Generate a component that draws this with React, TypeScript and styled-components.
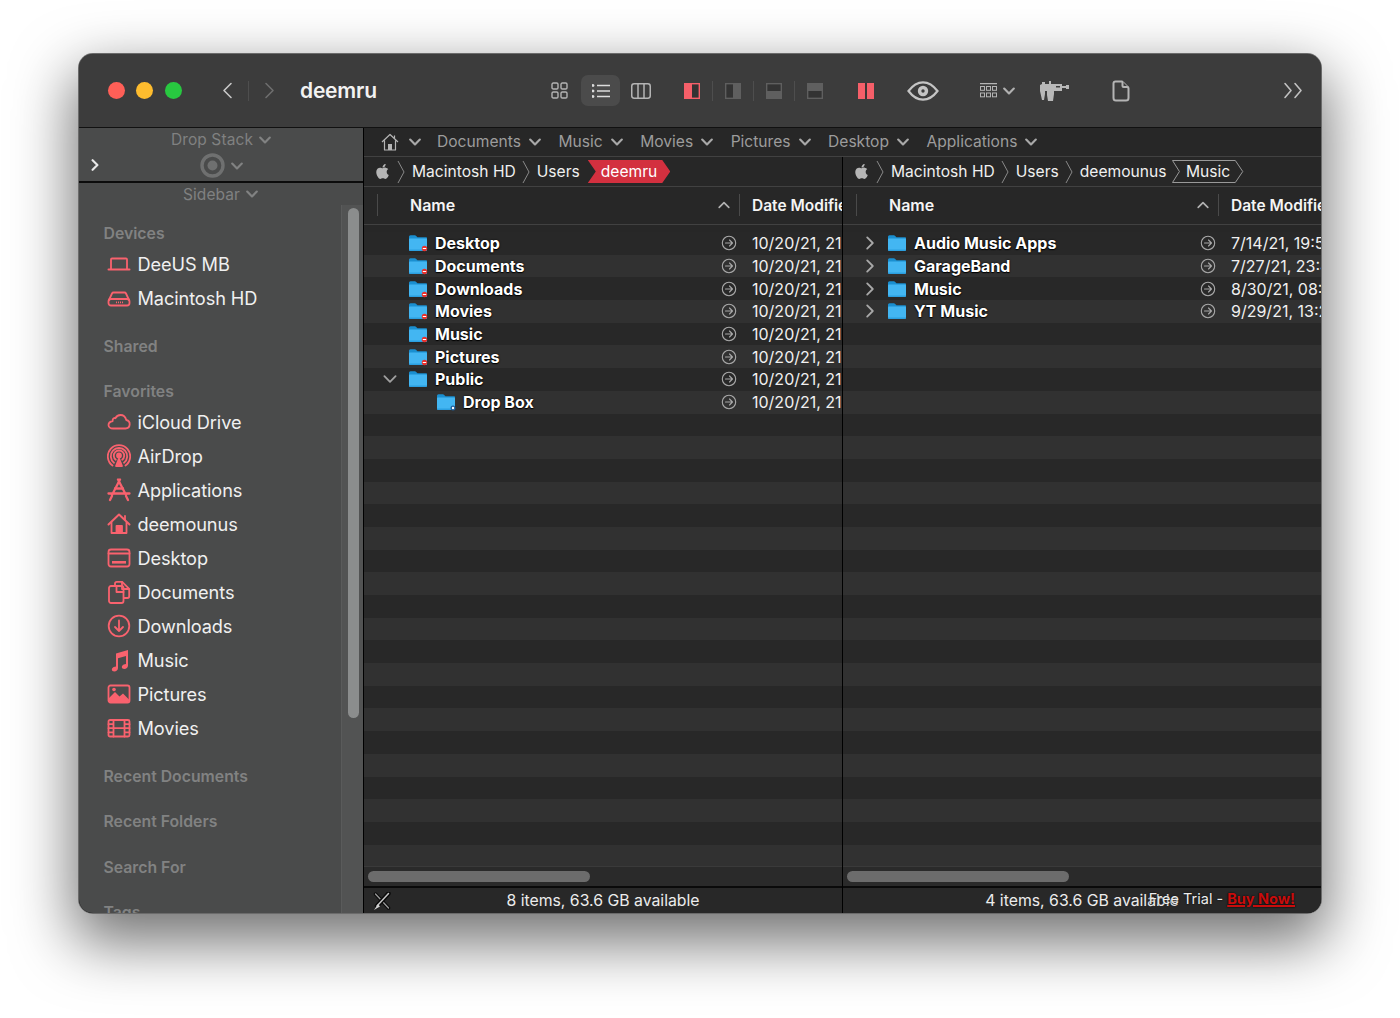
import React from "react";
import styled, { createGlobalStyle } from "styled-components";
import { FaApple } from "react-icons/fa";

const Global = createGlobalStyle`
  html, body { margin: 0; padding: 0; background: #fff; }
  body { font-family: Inter, "Liberation Sans", sans-serif; -webkit-font-smoothing: antialiased; }
  * { box-sizing: border-box; }
`;

const Stage = styled.div`
  width: 1400px;
  height: 1018px;
  padding: 54px 79px;
  overflow: hidden;
`;
const Win = styled.div`
  width: 1242px;
  height: 859px;
  border-radius: 14px;
  overflow: hidden;
  display: flex;
  flex-direction: column;
  background: #3c3c3c;
  box-shadow: 0 0 0 1px #6b6b6b, 0 24px 60px 6px rgba(0, 0, 0, 0.55);
`;
const Toolbar = styled.header`
  height: 74px;
  flex: none;
  display: flex;
  align-items: center;
  padding: 0 18px 0 28.5px;
  background: #3c3c3c;
  border-bottom: 1px solid #111;
`;
const Light = styled.span<{ $c: string }>`
  width: 17px;
  height: 17px;
  border-radius: 50%;
  background: ${(p) => p.$c};
  margin-right: 11.5px;
  flex: none;
`;
const Slot = styled.div<{ $w: number; $ml?: number }>`
  width: ${(p) => p.$w}px;
  margin-left: ${(p) => p.$ml ?? 0}px;
  flex: none;
  height: 31px;
  display: flex;
  align-items: center;
  justify-content: center;
  gap: 6px;
`;
const ActiveSlot = styled(Slot)`
  background: #4b4b4b;
  border-radius: 7px;
`;
const ToolSep = styled.span<{ $ml?: number }>`
  width: 1px;
  height: 20px;
  flex: none;
  margin-left: ${(p) => p.$ml ?? 0}px;
  background: #4e4e4e;
`;
const Title = styled.h1`
  width: 239px;
  margin: 0 0 0 21px;
  flex: none;
  font-size: 21px;
  font-weight: 600;
  letter-spacing: -0.2px;
  color: #f2f2f2;
`;
const Overflow = styled.div`
  margin-left: auto;
  display: flex;
`;
const Body = styled.div`
  flex: 1;
  display: flex;
  min-height: 0;
  background: #000;
`;
const Sidebar = styled.aside`
  width: 284px;
  flex: none;
  margin-right: 1px;
  display: flex;
  flex-direction: column;
  background: #4a4b4b;
  overflow: hidden;
`;
const StackArea = styled.div`
  height: 55px;
  flex: none;
  position: relative;
  display: flex;
  flex-direction: column;
  align-items: center;
  border-bottom: 2px solid #0c0c0c;
`;
const GhostLabel = styled.div`
  display: flex;
  align-items: center;
  justify-content: center;
  gap: 6px;
  height: 23px;
  font-size: 15.5px;
  font-weight: 400;
  letter-spacing: 0.1px;
  color: #808181;
`;
const StackIcon = styled.div`
  display: flex;
  align-items: center;
  gap: 6px;
  height: 29px;
`;
const StackExpand = styled.span`
  position: absolute;
  left: 10px;
  top: 31px;
  display: flex;
`;
const SidebarLabelRow = styled(GhostLabel)`
  height: 22px;
  flex: none;
  margin-left: -1px;
`;
const SideBody = styled.div`
  flex: 1;
  min-height: 0;
  display: flex;
`;
const SideList = styled.nav`
  flex: 1;
  min-width: 0;
  display: flex;
  flex-direction: column;
  padding: 17px 0 0 24.5px;
`;
const SectionLabel = styled.div<{ $mt?: number }>`
  height: 21px;
  flex: none;
  margin-top: ${(p) => p.$mt ?? 0}px;
  margin-bottom: 4px;
  line-height: 23px;
  font-size: 15.8px;
  font-weight: 600;
  white-space: nowrap;
  color: #818282;
`;
const SideItem = styled.div`
  height: 34px;
  flex: none;
  display: flex;
  align-items: center;
  font-size: 18.2px;
  letter-spacing: -0.1px;
  color: #f0f0f0;
`;
const SideIcon = styled.span`
  width: 34px;
  flex: none;
  display: flex;
  align-items: center;
  padding-left: 3px;
`;
const Track = styled.div`
  width: 22px;
  flex: none;
  padding: 3px 0 0 6px;
  background: #525353;
  border-left: 1px solid #5a5b5b;
`;
const Thumb = styled.div`
  width: 11px;
  height: 510px;
  border-radius: 6px;
  background: #8b8d8d;
`;
const Main = styled.main`
  flex: 1;
  min-width: 0;
  display: flex;
  flex-direction: column;
`;
const Panes = styled.div`
  flex: 1;
  min-height: 0;
  display: flex;
`;
const Pane = styled.section<{ $last?: boolean }>`
  width: 478px;
  flex: none;
  margin-right: ${(p) => (p.$last ? 0 : 1)}px;
  display: flex;
  flex-direction: column;
  background: #272727;
  overflow: hidden;
  position: relative;
`;
const FavBar = styled.div`
  height: 29px;
  flex: none;
  display: flex;
  align-items: center;
  padding: 0 0 1px 17px;
  background: #272727;
  border-bottom: 1px solid #414141;
  font-size: 15.6px;
  color: #9c9c9c;
  white-space: nowrap;
`;
const FavItem = styled.span`
  display: flex;
  align-items: center;
  gap: 8px;
  margin-right: 17.5px;
`;
const FavHome = styled(FavItem)`
  margin-right: 16px;
  gap: 10px;
`;
const PathBar = styled.div`
  height: 30px;
  flex: none;
  display: flex;
  align-items: center;
  padding-left: 10px;
  border-bottom: 1px solid #414141;
  font-size: 15.6px;
  color: #f0f0f0;
  white-space: nowrap;
`;
const Crumb = styled.span`
  display: flex;
  align-items: center;
  margin-left: 6px;
`;
const CrumbSep = styled.span`
  display: flex;
  margin-right: 7px;
`;
const RedCrumb = styled.span`
  height: 23px;
  margin-left: 8px;
  padding: 0 13px;
  display: flex;
  align-items: center;
  background: #d3303f;
  color: #fff;
  clip-path: polygon(0 0, calc(100% - 8px) 0, 100% 50%, calc(100% - 8px) 100%, 0 100%, 8px 50%);
`;
const OutlineCrumb = styled.span`
  position: relative;
  height: 23px;
  margin-left: 6px;
  padding: 0 13.5px;
  display: flex;
  align-items: center;
`;
const CrumbOutline = styled.svg`
  position: absolute;
  inset: 0;
  width: 100%;
  height: 100%;
`;
const Header = styled.div`
  height: 38px;
  flex: none;
  display: flex;
  align-items: center;
  padding: 0 0 1px 13px;
  border-bottom: 1px solid #414141;
  font-size: 16px;
  font-weight: 600;
  color: #f5f5f5;
  white-space: nowrap;
`;
const HeadSep = styled.span`
  width: 1px;
  height: 22px;
  flex: none;
  background: #4a4a4a;
`;
const HeadName = styled.span`
  width: 306px;
  margin-left: 32px;
  flex: none;
`;
const HeadCaret = styled.span`
  width: 16px;
  margin-right: 7px;
  flex: none;
  display: flex;
  justify-content: center;
`;
const HeadDate = styled.span`
  margin-left: 12px;
  font-size: 15.5px;
`;
const Rows = styled.div`
  flex: 1;
  min-height: 0;
  padding-top: 7px;
  overflow: hidden;
`;
const Row = styled.div<{ $alt: boolean }>`
  height: 22.7px;
  display: flex;
  align-items: center;
  white-space: nowrap;
  background: ${(p) => (p.$alt ? "#313131" : "#282828")};
`;
const NameCell = styled.div<{ $indent: number }>`
  width: 357px;
  flex: none;
  display: flex;
  align-items: center;
  padding-left: ${(p) => 45 + p.$indent}px;
  position: relative;
  font-size: 16px;
  font-weight: 700;
  color: #fff;
  text-shadow: 0 1px 1px #000, 0 0 2px #000;
`;
const Disclosure = styled.span<{ $x: number }>`
  position: absolute;
  left: ${(p) => p.$x}px;
  top: 50%;
  transform: translateY(-50%);
  display: flex;
`;
const FolderBox = styled.span`
  width: 27px;
  margin-left: -1px;
  flex: none;
  display: flex;
`;
const InfoCell = styled.span`
  width: 31px;
  flex: none;
  display: flex;
`;
const DateCell = styled.span`
  font-size: 16px;
  color: #f0f0f0;
`;
const HScroll = styled.div`
  height: 20px;
  flex: none;
  padding: 4px 0 0 4px;
  background: #2a2a2a;
  border-top: 1px solid #3a3a3a;
`;
const HThumb = styled.div`
  width: 222px;
  height: 11px;
  border-radius: 6px;
  background: #6c6c6c;
`;
const Status = styled.footer`
  height: 27px;
  flex: none;
  display: flex;
  align-items: center;
  justify-content: center;
  position: relative;
  padding-bottom: 1px;
  border-top: 2px solid #0a0a0a;
  background: #282828;
  font-size: 15.8px;
  color: #ececec;
  white-space: nowrap;
`;
const StatusIcon = styled.span`
  position: absolute;
  left: 9px;
  top: 4px;
  display: flex;
`;
const Trial = styled.span`
  position: absolute;
  right: 26px;
  top: 2px;
  font-size: 14.5px;
  color: #ededed;
  text-shadow: 0 0 2px #000;
`;
const Buy = styled.a`
  color: #c80c0c;
  font-weight: 700;
  text-decoration: underline;
  text-decoration-thickness: 1.5px;
`;

const PINK = "#f9626e";
const GREY = "#b4b4b4";

const Chev = ({ d, s = 10, c = "#9a9a9a", w = 1.8 }: { d: "down" | "up" | "left" | "right"; s?: number; c?: string; w?: number }) => {
  const p = { down: "M1 3l4 4 4-4", up: "M1 7l4-4 4 4", left: "M7 1L3 5l4 4", right: "M3 1l4 4-4 4" }[d];
  return (
    <svg width={s} height={s} viewBox="0 0 10 10" fill="none" stroke={c} strokeWidth={w} strokeLinecap="round" strokeLinejoin="round">
      <path d={p} />
    </svg>
  );
};
const LongChev = ({ c, w, h }: { c: string; w: number; h: number }) => (
  <svg width={w} height={h} viewBox={`0 0 ${w} ${h}`} fill="none" stroke={c} strokeWidth="1.6" strokeLinecap="round" strokeLinejoin="round">
    <path d={`M${w - 2} 1.5L2 ${h / 2}L${w - 2} ${h - 1.5}`} />
  </svg>
);
const RightLongChev = ({ c, w, h }: { c: string; w: number; h: number }) => (
  <svg width={w} height={h} viewBox={`0 0 ${w} ${h}`} fill="none" stroke={c} strokeWidth="1.6" strokeLinecap="round" strokeLinejoin="round">
    <path d={`M2 1.5L${w - 2} ${h / 2}L2 ${h - 1.5}`} />
  </svg>
);
const PathSep = () => (
  <svg width="8" height="24" viewBox="0 0 8 24" fill="none" stroke="#8a8a8a" strokeWidth="1">
    <path d="M1 1l6 11-6 11" />
  </svg>
);

const GridIcon = () => (
  <svg width="17" height="17" viewBox="0 0 17 17" fill="none" stroke={GREY} strokeWidth="1.4">
    <rect x="1" y="1" width="6" height="6" rx="1.3" />
    <rect x="10" y="1" width="6" height="6" rx="1.3" />
    <rect x="1" y="10" width="6" height="6" rx="1.3" />
    <rect x="10" y="10" width="6" height="6" rx="1.3" />
  </svg>
);
const ListIcon = () => (
  <svg width="18" height="14" viewBox="0 0 18 14" stroke="#dcdcdc" strokeWidth="1.5" fill="#dcdcdc">
    <path d="M5 1.5h13M5 7h13M5 12.5h13" />
    <circle cx="1" cy="1.5" r=".7" />
    <circle cx="1" cy="7" r=".7" />
    <circle cx="1" cy="12.5" r=".7" />
  </svg>
);
const ColumnsIcon = () => (
  <svg width="20" height="16" viewBox="0 0 20 16" fill="none" stroke={GREY} strokeWidth="1.5">
    <rect x=".75" y=".75" width="18.5" height="14.5" rx="2.4" />
    <path d="M7 1v14M13 1v14" />
  </svg>
);
const PaneIcon = ({ kind }: { kind: "redLeft" | "left" | "bottom" | "top" | "split" }) => {
  const red = "#f55f69";
  const dim = "#5f5f5f";
  if (kind === "split")
    return (
      <svg width="16" height="16" viewBox="0 0 16 16">
        <rect width="7.2" height="16" fill={red} />
        <rect x="8.8" width="7.2" height="16" fill={red} />
        <rect x="7.2" width="1.6" height="16" fill="#333" />
      </svg>
    );
  if (kind === "redLeft")
    return (
      <svg width="16" height="16" viewBox="0 0 16 16">
        <rect width="16" height="16" fill={red} />
        <rect x="8" y="1.4" width="6.6" height="13.2" fill="#333" />
      </svg>
    );
  if (kind === "left")
    return (
      <svg width="16" height="16" viewBox="0 0 16 16">
        <rect width="16" height="16" fill={dim} />
        <rect x="1.4" y="1.4" width="6.6" height="13.2" fill="#333" />
      </svg>
    );
  return (
    <svg width="16" height="16" viewBox="0 0 16 16">
      <rect width="16" height="16" fill={dim} />
      {kind === "bottom" ? <rect x="1.4" y="1.4" width="13.2" height="6.6" fill="#333" /> : <rect x="1.4" y="8" width="13.2" height="6.6" fill="#333" />}
    </svg>
  );
};
const EyeIcon = () => (
  <svg width="32" height="20" viewBox="0 0 32 20" fill="none">
    <path d="M1.5 10C6 4 11 1.3 16 1.3S26 4 30.500 10C26 16 21 18.700 16 18.700S6 16 1.500 10Z" stroke="#c4c4c4" strokeWidth="2.200" />
    <circle cx="16" cy="10" r="5.200" fill="#c4c4c4" />
    <circle cx="16" cy="10" r="1.700" fill="#3c3c3c" />
  </svg>
);
const TableIcon = () => (
  <svg width="17" height="15" viewBox="0 0 17 15" fill="none" stroke={GREY}>
    <path d="M0 .7h17" strokeWidth="1.300" />
    <rect x=".5" y="3.500" width="4" height="3.800" />
    <rect x="6.500" y="3.500" width="4" height="3.800" />
    <rect x="12.500" y="3.500" width="4" height="3.800" />
    <rect x=".5" y="10" width="4" height="3.800" />
    <rect x="6.500" y="10" width="4" height="3.800" />
    <rect x="12.500" y="10" width="4" height="3.800" />
  </svg>
);
const CaliperIcon = () => (
  <svg width="29" height="21" viewBox="0 0 29 21" fill="#b8b8b8">
    <path d="M2 2h3v2h4V1h2v3h11v7h-8v3l-1 7H8l-1-6V11H5v3l-1 6H2l-2-9V5l2-1Z" />
    <path d="M22 6h4V5h3v4h-3V8h-4Z" />
    <rect x="16" y="6" width="4" height="1.500" fill="#3c3c3c" />
  </svg>
);
const DocIcon = () => (
  <svg width="18" height="22" viewBox="0 0 18 22" fill="none" stroke={GREY} strokeWidth="2" strokeLinejoin="round">
    <path d="M3.500 1.500H10c.5 0 .5.500.5 1V6c0 .6.500 1 1 1H15c1 0 1.500.500 1.500 1.500V18c0 1.500-1 2.500-2.500 2.500H4c-1.500 0-2.500-1-2.500-2.500V3.500c0-1 1-2 2-2Z" />
    <path d="M11 1.500l5.500 5.500" strokeWidth="1" />
  </svg>
);
const TargetIcon = () => (
  <svg width="25" height="25" viewBox="0 0 25 25" fill="none">
    <circle cx="12.500" cy="12.500" r="10.500" stroke="#6f7070" strokeWidth="3.400" />
    <circle cx="12.500" cy="12.500" r="5" fill="#6f7070" />
  </svg>
);

const Pink = ({ children }: { children: React.ReactNode }) => (
  <svg width="24" height="24" viewBox="0 0 24 24" fill="none" stroke={PINK} strokeWidth="1.800" strokeLinejoin="round" strokeLinecap="round">
    {children}
  </svg>
);
const icons: Record<string, React.ReactNode> = {
  laptop: (
    <Pink>
      <path d="M4 17V7.500A1 1 0 0 1 5 6.500h14a1 1 0 0 1 1 1V17" />
      <path d="M1.500 17.500h21" strokeWidth="2" />
    </Pink>
  ),
  hd: (
    <Pink>
      <path d="M2 14l3-6.500c.3-.6.700-1 1.500-1h11c.8 0 1.200.4 1.500 1l3 6.500" />
      <rect x="1.500" y="13" width="21" height="6.500" rx="2.500" />
      <path d="M9 16.300h7" strokeDasharray="1 1" strokeWidth="1.800" strokeLinecap="butt" />
    </Pink>
  ),
  cloud: (
    <Pink>
      <path d="M6 18.500h12.500a4.300 4.300 0 0 0 .8-8.500C18.500 7 16 5 13.500 5c-2.300 0-4 1-5 3.200C7.800 7.800 6.500 8 6 9c-.5.700-.4 1.500-.3 2C3.500 11.500 1.500 13 1.500 15c0 2 2 3.500 4.500 3.500Z" />
    </Pink>
  ),
  airdrop: (
    <Pink>
      <path d="M5.500 21.500a11.200 11.200 0 1 1 13 0" />
      <path d="M7 18.700a8.200 8.200 0 1 1 10 0" />
      <path d="M8.800 15.800a5.200 5.200 0 1 1 6.400 0" />
      <circle cx="12" cy="11.500" r="2" fill={PINK} />
      <path d="M12 14.500l-3 7.500h6Z" fill={PINK} />
    </Pink>
  ),
  apps: (
    <Pink>
      <path d="M13 1.500L5 17M11 1.500L19 17M1.500 15.500h21" strokeWidth="2.300" />
      <path d="M3 22l2-4M21 22l-2-4M8 10.500h8" strokeWidth="2.300" />
    </Pink>
  ),
  home: (
    <Pink>
      <path d="M1.500 12.500L12 2.500l10.500 10" strokeWidth="2" />
      <path d="M4.500 10.500V21h15V10.500" />
      <rect x="9.500" y="14" width="5.500" height="7" fill={PINK} />
      <path d="M18 4v4" />
    </Pink>
  ),
  desktop: (
    <Pink>
      <rect x="1.500" y="3.500" width="21" height="17" rx="2.500" />
      <path d="M1.500 7.500h21" />
      <path d="M5 16.300h14" strokeWidth="2.600" strokeLinecap="butt" />
    </Pink>
  ),
  docs: (
    <Pink>
      <path d="M8 5.500V3.500c0-1 .7-1.700 1.700-1.700h5.500l7 7v7.500c0 1-.7 1.700-1.700 1.700H17" />
      <path d="M15 2v7h7" />
      <rect x="2" y="6" width="14.500" height="17" rx="2" />
      <path d="M9.500 6v6h7" />
    </Pink>
  ),
  down: (
    <Pink>
      <circle cx="12" cy="12" r="10.300" />
      <path d="M12 6.500v10.500M8 13l4 4 4-4" />
    </Pink>
  ),
  music: (
    <svg width="24" height="24" viewBox="0 0 24 24" fill={PINK}>
      <path d="M9 5.500L21 2v15.500c0 2-1.700 3.500-3.700 3.500-1.500 0-2.500-.8-2.500-2 0-1.500 1.500-2.600 3-2.800l1.200-.2V8L11 10.200V20c0 2-1.700 3.500-3.700 3.500-1.500 0-2.500-.8-2.500-2 0-1.500 1.500-2.600 3-2.800L9 18.500Z" />
    </svg>
  ),
  pictures: (
    <svg width="24" height="24" viewBox="0 0 24 24">
      <rect x="1.500" y="3.500" width="21" height="17" rx="2" fill="none" stroke={PINK} strokeWidth="1.800" />
      <path d="M2 19v-3l6-6 4.500 4.500 3.500-3 6 6V19a1 1 0 0 1-1 1H3a1 1 0 0 1-1-1Z" fill={PINK} />
      <circle cx="7" cy="7.500" r="1.800" fill={PINK} />
    </svg>
  ),
  movies: (
    <Pink>
      <rect x="1.500" y="4" width="21" height="16.500" rx="1.500" />
      <path d="M6.500 4v16.500M17.500 4v16.500M6.500 12.200h11M1.500 8.200h5M1.500 12.200h5M1.500 16.300h5M17.500 8.200h5M17.500 12.200h5M17.500 16.300h5" />
    </Pink>
  ),
};
const Folder = ({ badge }: { badge?: "red" | "blue" }) => (
  <svg width="20" height="18" viewBox="0 0 20 18">
    <path d="M1 3c0-1 .6-1.700 1.500-1.700h4.300c.6 0 1 .2 1.400.6L9.500 3.200H18c.6 0 1 .4 1 1V6H1Z" fill="#1a8fd0" />
    <path d="M1 5.500c0-.5.400-1 1-1h16c.6 0 1 .5 1 1v10.300c0 .7-.5 1.200-1.200 1.200H2.200C1.500 17 1 16.500 1 15.800Z" fill="#43b6f2" />
    <path d="M1 15.500h18v.3c0 .7-.5 1.200-1.200 1.200H2.200C1.500 17 1 16.500 1 15.800Z" fill="#2b9fe0" />
    {badge === "red" && (
      <>
        <circle cx="16.500" cy="14.500" r="2.700" fill="#e8322e" />
        <rect x="14.800" y="14" width="3.400" height="1" fill="#fff" />
      </>
    )}
    {badge === "blue" && (
      <>
        <circle cx="17" cy="15" r="2.500" fill="#1f5f9c" />
        <circle cx="17" cy="15" r="1.200" fill="#fff" />
      </>
    )}
  </svg>
);
const InfoIcon = () => (
  <svg width="16" height="16" viewBox="0 0 16 16" fill="none" stroke="#a8a8a8" strokeWidth="1.100" strokeLinecap="round" strokeLinejoin="round">
    <circle cx="8" cy="8" r="6.700" />
    <path d="M4.500 8h7M8.500 5l3 3-3 3" />
  </svg>
);
const HomeSmall = () => (
  <svg width="18" height="18" viewBox="0 0 18 18" fill="none" stroke="#b5b5b5" strokeWidth="1.200" strokeLinejoin="round">
    <path d="M1 9l8-7.500L17 9M3.500 7.500V17h11V7.500" />
    <rect x="7" y="11" width="4" height="6" fill="#b5b5b5" stroke="none" />
    <path d="M13.500 2.500v3" />
  </svg>
);
const CrossedTools = () => (
  <svg width="18" height="19" viewBox="0 0 18 19" fill="none" strokeLinecap="round">
    <path d="M2.500 2l13 14" stroke="#0b0b0b" strokeWidth="3.500" />
    <path d="M2.500 2l13 14" stroke="#9a9a9a" strokeWidth="1.300" />
    <path d="M15.500 1.500L4 14" stroke="#0b0b0b" strokeWidth="4.500" />
    <path d="M15.500 1.500L4 14" stroke="#c4c4c4" strokeWidth="1.500" />
    <path d="M5 12L1 18l6-3.500Z" fill="#d0d0d0" />
  </svg>
);

const favs = ["Documents", "Music", "Movies", "Pictures", "Desktop", "Applications"];
const leftRows = [
  { n: "Desktop", b: "red" as const },
  { n: "Documents", b: "red" as const },
  { n: "Downloads", b: "red" as const },
  { n: "Movies", b: "red" as const },
  { n: "Music", b: "red" as const },
  { n: "Pictures", b: "red" as const },
  { n: "Public", open: true },
  { n: "Drop Box", b: "blue" as const, indent: 28 },
];
const rightRows = [
  { n: "Audio Music Apps", d: "7/14/21, 19:55", closed: true },
  { n: "GarageBand", d: "7/27/21, 23:44", closed: true },
  { n: "Music", d: "8/30/21, 08:12", closed: true },
  { n: "YT Music", d: "9/29/21, 13:27", closed: true },
];
type R = { n: string; b?: "red" | "blue"; indent?: number; open?: boolean; closed?: boolean; d?: string };

const ROWS = 28;

const FileList = ({ items, defDate }: { items: R[]; defDate: string }) => (
  <Rows>
    {Array.from({ length: ROWS }, (_, i) => {
      const it = items[i];
      return (
        <Row key={i} $alt={i % 2 === 1}>
          {it && (
            <>
              <NameCell $indent={it.indent ?? 0}>
                {it.open && (
                  <Disclosure $x={19}>
                    <Chev d="down" s={14} c="#a0a0a0" w={1.300} />
                  </Disclosure>
                )}
                {it.closed && (
                  <Disclosure $x={20}>
                    <Chev d="right" s={14} c="#a8a8a8" w={1.300} />
                  </Disclosure>
                )}
                <FolderBox>
                  <Folder badge={it.b} />
                </FolderBox>
                {it.n}
              </NameCell>
              <InfoCell>
                <InfoIcon />
              </InfoCell>
              <DateCell>{it.d ?? defDate}</DateCell>
            </>
          )}
        </Row>
      );
    })}
  </Rows>
);

const TableHead = () => (
  <Header>
    <HeadSep />
    <HeadName>Name</HeadName>
    <HeadCaret>
      <Chev d="up" s={12} c="#b0b0b0" w={1.400} />
    </HeadCaret>
    <HeadSep />
    <HeadDate>Date Modified</HeadDate>
  </Header>
);

const AppleMark = () => <FaApple size={17} color="#b5b5b5" />;

export default function App() {
  const sideA = [
    ["laptop", "DeeUS MB"],
    ["hd", "Macintosh HD"],
  ];
  const sideB = [
    ["cloud", "iCloud Drive"],
    ["airdrop", "AirDrop"],
    ["apps", "Applications"],
    ["home", "deemounus"],
    ["desktop", "Desktop"],
    ["docs", "Documents"],
    ["down", "Downloads"],
    ["music", "Music"],
    ["pictures", "Pictures"],
    ["movies", "Movies"],
  ];
  return (
    <Stage>
      <Global />
      <Win>
        <Toolbar>
          <Light $c="#ff5f57" />
          <Light $c="#febc2e" />
          <Light $c="#28c840" />
          <Slot $w={20} $ml={24}>
            <LongChev c="#c8c8c8" w={11} h={17} />
          </Slot>
          <ToolSep $ml={11} />
          <Slot $w={20} $ml={10}>
            <RightLongChev c="#6e6e6e" w={11} h={17} />
          </Slot>
          <Title>deemru</Title>
          <Slot $w={40}>
            <GridIcon />
          </Slot>
          <ActiveSlot $w={39} $ml={2}>
            <ListIcon />
          </ActiveSlot>
          <Slot $w={42}>
            <ColumnsIcon />
          </Slot>
          <Slot $w={40} $ml={10}>
            <PaneIcon kind="redLeft" />
          </Slot>
          <ToolSep />
          <Slot $w={40}>
            <PaneIcon kind="left" />
          </Slot>
          <ToolSep />
          <Slot $w={40}>
            <PaneIcon kind="bottom" />
          </Slot>
          <ToolSep />
          <Slot $w={40}>
            <PaneIcon kind="top" />
          </Slot>
          <Slot $w={62}>
            <PaneIcon kind="split" />
          </Slot>
          <Slot $w={52}>
            <EyeIcon />
          </Slot>
          <Slot $w={69} $ml={14}>
            <TableIcon />
            <Chev d="down" s={12} c="#b0b0b0" />
          </Slot>
          <Slot $w={44}>
            <CaliperIcon />
          </Slot>
          <Slot $w={90}>
            <DocIcon />
          </Slot>
          <Overflow>
            <RightLongChev c="#c0c0c0" w={10} h={17} />
            <RightLongChev c="#c0c0c0" w={10} h={17} />
          </Overflow>
        </Toolbar>
        <Body>
          <Sidebar>
            <StackArea>
              <GhostLabel>
                Drop Stack <Chev d="down" s={12} c="#818282" />
              </GhostLabel>
              <StackIcon>
                <TargetIcon />
                <Chev d="down" s={12} c="#818282" />
              </StackIcon>
              <StackExpand>
                <Chev d="right" s={12} c="#e8e8e8" />
              </StackExpand>
            </StackArea>
            <SidebarLabelRow>
              Sidebar <Chev d="down" s={12} c="#818282" />
            </SidebarLabelRow>
            <SideBody>
              <SideList>
                <SectionLabel>Devices</SectionLabel>
                {sideA.map(([ic, t]) => (
                  <SideItem key={t}>
                    <SideIcon>{icons[ic]}</SideIcon>
                    {t}
                  </SideItem>
                ))}
                <SectionLabel $mt={20}>Shared</SectionLabel>
                <SectionLabel $mt={20}>Favorites</SectionLabel>
                {sideB.map(([ic, t]) => (
                  <SideItem key={t}>
                    <SideIcon>{icons[ic]}</SideIcon>
                    {t}
                  </SideItem>
                ))}
                <SectionLabel $mt={20}>Recent Documents</SectionLabel>
                <SectionLabel $mt={20}>Recent Folders</SectionLabel>
                <SectionLabel $mt={21}>Search For</SectionLabel>
                <SectionLabel $mt={20}>Tags</SectionLabel>
              </SideList>
              <Track>
                <Thumb />
              </Track>
            </SideBody>
          </Sidebar>
          <Main>
            <FavBar>
              <FavHome>
                <HomeSmall />
                <Chev d="down" s={12} c="#a8a8a8" />
              </FavHome>
              {favs.map((f) => (
                <FavItem key={f}>
                  {f}
                  <Chev d="down" s={12} c="#a8a8a8" />
                </FavItem>
              ))}
            </FavBar>
            <Panes>
              <Pane>
                <PathBar>
                  <AppleMark />
                  <Crumb>
                    <CrumbSep>
                      <PathSep />
                    </CrumbSep>
                    Macintosh HD
                  </Crumb>
                  <Crumb>
                    <CrumbSep>
                      <PathSep />
                    </CrumbSep>
                    Users
                  </Crumb>
                  <RedCrumb>deemru</RedCrumb>
                </PathBar>
                <TableHead />
                <FileList items={leftRows} defDate="10/20/21, 21:13" />
                <HScroll>
                  <HThumb />
                </HScroll>
                <Status>
                  <StatusIcon>
                    <CrossedTools />
                  </StatusIcon>
                  8 items, 63.6 GB available
                </Status>
              </Pane>
              <Pane $last>
                <PathBar>
                  <AppleMark />
                  <Crumb>
                    <CrumbSep>
                      <PathSep />
                    </CrumbSep>
                    Macintosh HD
                  </Crumb>
                  <Crumb>
                    <CrumbSep>
                      <PathSep />
                    </CrumbSep>
                    Users
                  </Crumb>
                  <Crumb>
                    <CrumbSep>
                      <PathSep />
                    </CrumbSep>
                    deemounus
                  </Crumb>
                  <OutlineCrumb>
                    <CrumbOutline viewBox="0 0 72 23" preserveAspectRatio="none" fill="none" stroke="#9a9a9a" strokeWidth="1">
                      <path d="M.5 .5H64L71.500 11.500L64 22.500H.5L7.500 11.500Z" />
                    </CrumbOutline>
                    Music
                  </OutlineCrumb>
                </PathBar>
                <TableHead />
                <FileList items={rightRows} defDate="" />
                <HScroll>
                  <HThumb />
                </HScroll>
                <Status>
                  4 items, 63.6 GB available
                  <Trial>
                    Free Trial - <Buy href="#">Buy Now!</Buy>
                  </Trial>
                </Status>
              </Pane>
            </Panes>
          </Main>
        </Body>
      </Win>
    </Stage>
  );
}
